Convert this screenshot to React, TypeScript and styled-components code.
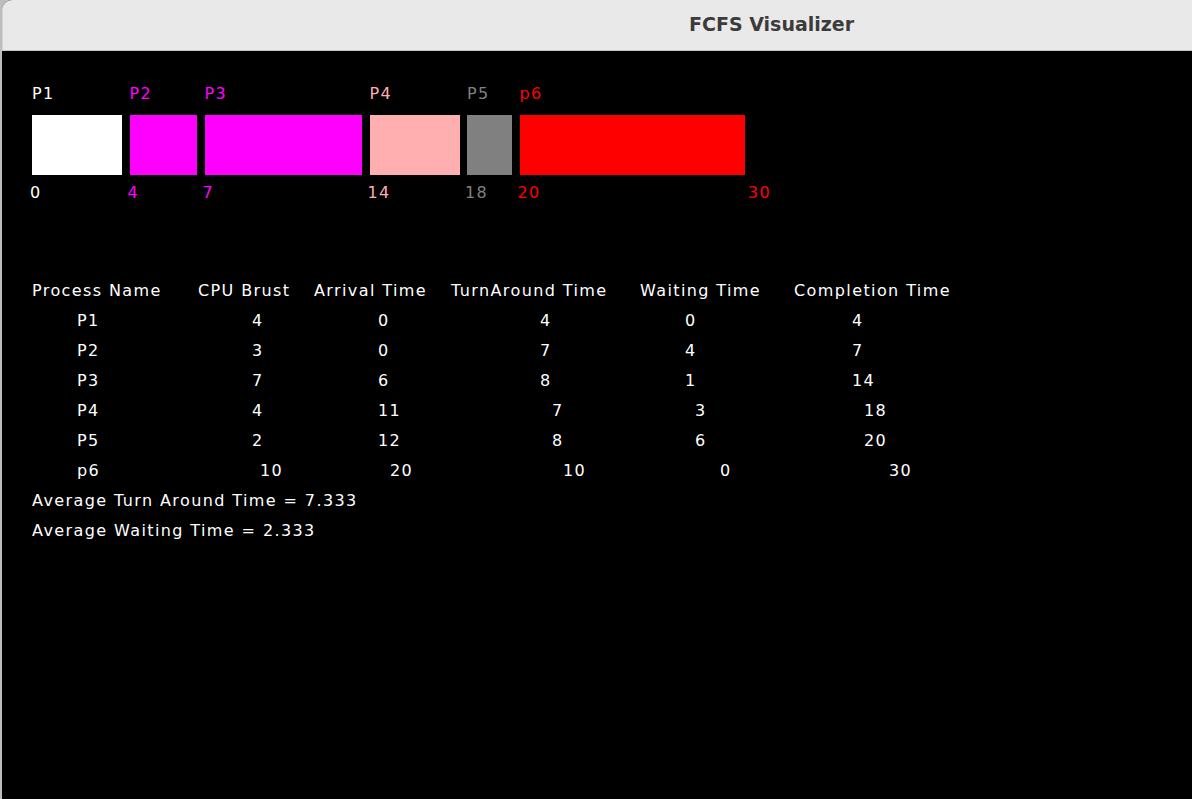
import styled, { createGlobalStyle } from "styled-components";

const GlobalStyle = createGlobalStyle`
  html, body {
    margin: 0;
    padding: 0;
    background: #bdbdbd;
  }
  #root {
    min-height: 100vh;
    display: flex;
  }
`;

interface IProcess {
  name: string;
  burst: number;
  arrival: number;
  turnaround: number;
  waiting: number;
  completion: number;
  color: string;
}

const processes: IProcess[] = [
  { name: "P1", burst: 4, arrival: 0, turnaround: 4, waiting: 0, completion: 4, color: "#ffffff" },
  { name: "P2", burst: 3, arrival: 0, turnaround: 7, waiting: 4, completion: 7, color: "#ff00ff" },
  { name: "P3", burst: 7, arrival: 6, turnaround: 8, waiting: 1, completion: 14, color: "#ff00ff" },
  { name: "P4", burst: 4, arrival: 11, turnaround: 7, waiting: 3, completion: 18, color: "#ffafaf" },
  { name: "P5", burst: 2, arrival: 12, turnaround: 8, waiting: 6, completion: 20, color: "#808080" },
  { name: "p6", burst: 10, arrival: 20, turnaround: 10, waiting: 0, completion: 30, color: "#ff0000" },
];

const headerCols = [32, 198, 314, 451, 640, 794];
const rowCols = [
  [77, 252, 378, 540, 685, 852],
  [77, 252, 378, 540, 685, 852],
  [77, 252, 378, 540, 685, 852],
  [77, 252, 378, 552, 695, 864],
  [77, 252, 378, 552, 695, 864],
  [77, 260, 390, 563, 720, 889],
];

const UNIT = 22.5;

const Window = styled.div`
  flex: 1;
  display: flex;
  flex-direction: column;
  margin-left: 2px;
  border-top-left-radius: 10px;
  overflow: hidden;
  background: #000;
  font-family: "DejaVu Sans", "Liberation Sans", sans-serif;
`;

const TitleBar = styled.header`
  height: 51px;
  flex: none;
  box-sizing: border-box;
  display: flex;
  align-items: center;
  padding: 0 0 3px 686px;
  background: #e9e9e9;
  border-bottom: 1px solid #c6c6c6;
  border-left: 1px solid #d4d4d4;
`;

const Title = styled.h1`
  margin: 0;
  font-family: "DejaVu Sans", "Noto Sans", sans-serif;
  font-weight: 700;
  font-size: 19px;
  color: #3b3b3b;
`;

const Canvas = styled.main`
  flex: 1;
  padding: 34px 0 0 30px;
  color: #fff;
  font-size: 16px;
  letter-spacing: 1.4px;
`;

const Gantt = styled.div`
  display: flex;
  align-items: flex-start;
  gap: 7.5px;
`;

const Slot = styled.div<{ $width: number }>`
  display: flex;
  flex-direction: column;
  width: ${(p) => p.$width}px;
`;

const SlotLabel = styled.span<{ $color: string }>`
  height: 18px;
  line-height: 18px;
  color: ${(p) => p.$color};
`;

const Block = styled.div<{ $color: string }>`
  height: 60px;
  margin-top: 12px;
  background: ${(p) => p.$color};
`;

const TimeLabel = styled.span<{ $color: string }>`
  height: 18px;
  line-height: 18px;
  margin-top: 9px;
  margin-left: -2px;
  color: ${(p) => p.$color};
`;

const EndSlot = styled.div`
  display: flex;
  flex-direction: column;
  padding-top: 90px;
  margin-left: -2px;
`;

const Table = styled.section`
  margin-top: 74px;
  display: flex;
  flex-direction: column;
`;

const Row = styled.div<{ $cols: string }>`
  display: grid;
  grid-template-columns: ${(p) => p.$cols};
  height: 30px;
  line-height: 30px;
  white-space: nowrap;
`;

const Cell = styled.span``;

const Summary = styled.div`
  height: 30px;
  line-height: 30px;
`;

function colsFor(xs: number[]) {
  const start = 32;
  const widths = xs.map((x, i) => (i === xs.length - 1 ? "auto" : `${xs[i + 1] - x}px`));
  return `${xs[0] - start}px ${widths.join(" ")}`;
}

export default function App() {
  let clock = 0;
  const last = processes[processes.length - 1];
  const avgTat = processes.reduce((s, p) => s + p.turnaround, 0) / processes.length;
  const avgWt = processes.reduce((s, p) => s + p.waiting, 0) / processes.length;

  return (
    <>
      <GlobalStyle />
      <Window>
        <TitleBar>
          <Title>FCFS Visualizer</Title>
        </TitleBar>
        <Canvas>
          <Gantt>
            {processes.map((p) => {
              const start = clock;
              clock += p.burst;
              return (
                <Slot key={p.name} $width={p.burst * UNIT}>
                  <SlotLabel $color={p.color}>{p.name}</SlotLabel>
                  <Block $color={p.color} />
                  <TimeLabel $color={p.color}>{start}</TimeLabel>
                </Slot>
              );
            })}
            <EndSlot>
              <TimeLabel $color={last.color}>{last.completion}</TimeLabel>
            </EndSlot>
          </Gantt>
          <Table>
            <Row $cols={colsFor(headerCols)}>
              <span />
              <Cell>Process Name</Cell>
              <Cell>CPU Brust</Cell>
              <Cell>Arrival Time</Cell>
              <Cell>TurnAround Time</Cell>
              <Cell>Waiting Time</Cell>
              <Cell>Completion Time</Cell>
            </Row>
            {processes.map((p, i) => (
              <Row key={p.name} $cols={colsFor(rowCols[i])}>
                <span />
                <Cell>{p.name}</Cell>
                <Cell>{p.burst}</Cell>
                <Cell>{p.arrival}</Cell>
                <Cell>{p.turnaround}</Cell>
                <Cell>{p.waiting}</Cell>
                <Cell>{p.completion}</Cell>
              </Row>
            ))}
            <Summary>Average Turn Around Time = {avgTat.toFixed(3)}</Summary>
            <Summary>Average Waiting Time = {avgWt.toFixed(3)}</Summary>
          </Table>
        </Canvas>
      </Window>
    </>
  );
}
